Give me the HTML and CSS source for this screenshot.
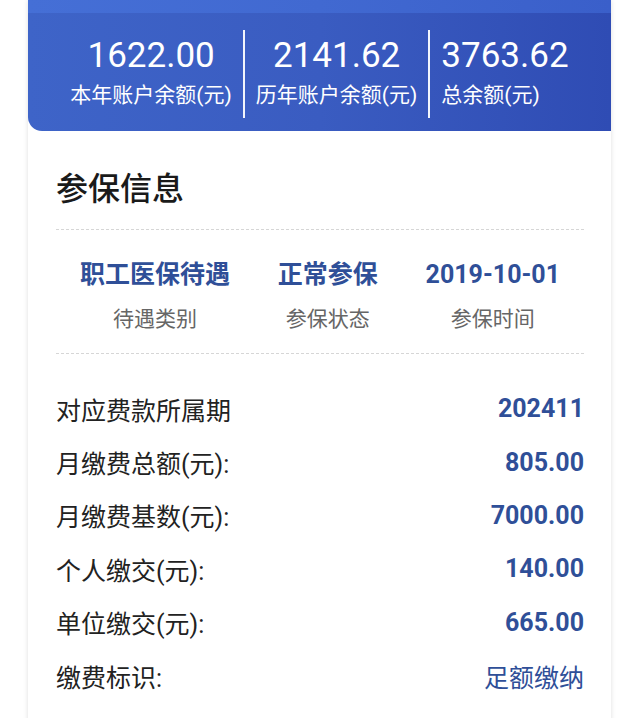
FILE: index.html
```html
<!DOCTYPE html>
<html lang="zh-CN">
<head>
<meta charset="utf-8">
<link rel="stylesheet" href="styles.css">
</head>
<body>
<div class="page">
  <div class="card">
    <div class="header">
      <div class="topband"></div>
      <div class="stats">
        <div class="stat">
          <div class="num">1622.00</div>
          <div class="lbl">本年账户余额(元)</div>
        </div>
        <div class="divider"></div>
        <div class="stat">
          <div class="num">2141.62</div>
          <div class="lbl">历年账户余额(元)</div>
        </div>
        <div class="divider"></div>
        <div class="stat stat-left">
          <div class="num">3763.62</div>
          <div class="lbl">总余额(元)</div>
        </div>
      </div>
    </div>
    <div class="body">
      <div class="title">参保信息</div>
      <div class="info">
        <div class="info-item">
          <div class="info-val">职工医保待遇</div>
          <div class="info-lbl">待遇类别</div>
        </div>
        <div class="info-item">
          <div class="info-val">正常参保</div>
          <div class="info-lbl">参保状态</div>
        </div>
        <div class="info-item">
          <div class="info-val">2019-10-01</div>
          <div class="info-lbl">参保时间</div>
        </div>
      </div>
      <div class="list">
        <div class="row"><span class="k">对应费款所属期</span><span class="v">202411</span></div>
        <div class="row"><span class="k">月缴费总额(元):</span><span class="v">805.00</span></div>
        <div class="row"><span class="k">月缴费基数(元):</span><span class="v">7000.00</span></div>
        <div class="row"><span class="k">个人缴交(元):</span><span class="v">140.00</span></div>
        <div class="row"><span class="k">单位缴交(元):</span><span class="v">665.00</span></div>
        <div class="row"><span class="k">缴费标识:</span><span class="v v-normal">足额缴纳</span></div>
      </div>
    </div>
  </div>
</div>
</body>
</html>
```

FILE: styles.css
```css
html, body {
  margin: 0;
  padding: 0;
  background: #ffffff;
  font-family: Roboto, "Noto Sans CJK SC", sans-serif;
}

.page {
  width: 640px;
  height: 718px;
  overflow: hidden;
  padding-left: 28px;
  box-sizing: border-box;
}

.card {
  width: 583px;
  min-height: 760px;
  background: #ffffff;
  box-shadow: 0 0 5px rgba(0, 0, 0, 0.13);
  border-bottom-left-radius: 14px;
}

.header {
  height: 131px;
  background: linear-gradient(90deg, #3e64c8 0%, #3a5cc1 50%, #2f4cb4 100%);
  border-bottom-left-radius: 14px;
  display: flex;
  flex-direction: column;
}

.topband {
  height: 13px;
  background: linear-gradient(90deg, #456fd6 0%, #4169d1 50%, #3a5fca 100%);
}

.stats {
  display: flex;
  justify-content: center;
  gap: 11px;
  margin-top: 17px;
  height: 88px;
  color: #ffffff;
}

.stat {
  display: flex;
  flex-direction: column;
  align-items: center;
  padding-top: 5px;
}

.stat-left {
  align-items: flex-start;
}

.num {
  font-size: 35px;
  line-height: 41px;
  font-weight: 400;
}

.lbl {
  font-size: 21px;
  line-height: 28px;
  margin-top: 5px;
}

.divider {
  width: 2px;
  background: #f2f5fc;
}

.body {
  padding: 38px 27px 0 28px;
}

.title {
  font-size: 32px;
  line-height: 40px;
  font-weight: 500;
  color: #1a1a1a;
  padding-bottom: 20px;
  border-bottom: 1px dashed #d6d6d6;
}

.info {
  display: flex;
  justify-content: space-around;
  padding-top: 29px;
  padding-bottom: 20px;
  border-bottom: 1px dashed #d6d6d6;
}

.info-item {
  display: flex;
  flex-direction: column;
  align-items: center;
}

.info-val {
  font-size: 25px;
  line-height: 32px;
  font-weight: 700;
  color: #2f4f98;
}

.info-lbl {
  font-size: 21px;
  line-height: 28px;
  margin-top: 14px;
  color: #666666;
}

.list {
  padding-top: 28px;
}

.row {
  display: flex;
  justify-content: space-between;
  align-items: center;
  height: 53.4px;
}

.k {
  font-size: 25px;
  color: #222222;
}

.v {
  font-size: 25px;
  font-weight: 700;
  color: #2f4f98;
}

.v-normal {
  font-weight: 400;
}
```
